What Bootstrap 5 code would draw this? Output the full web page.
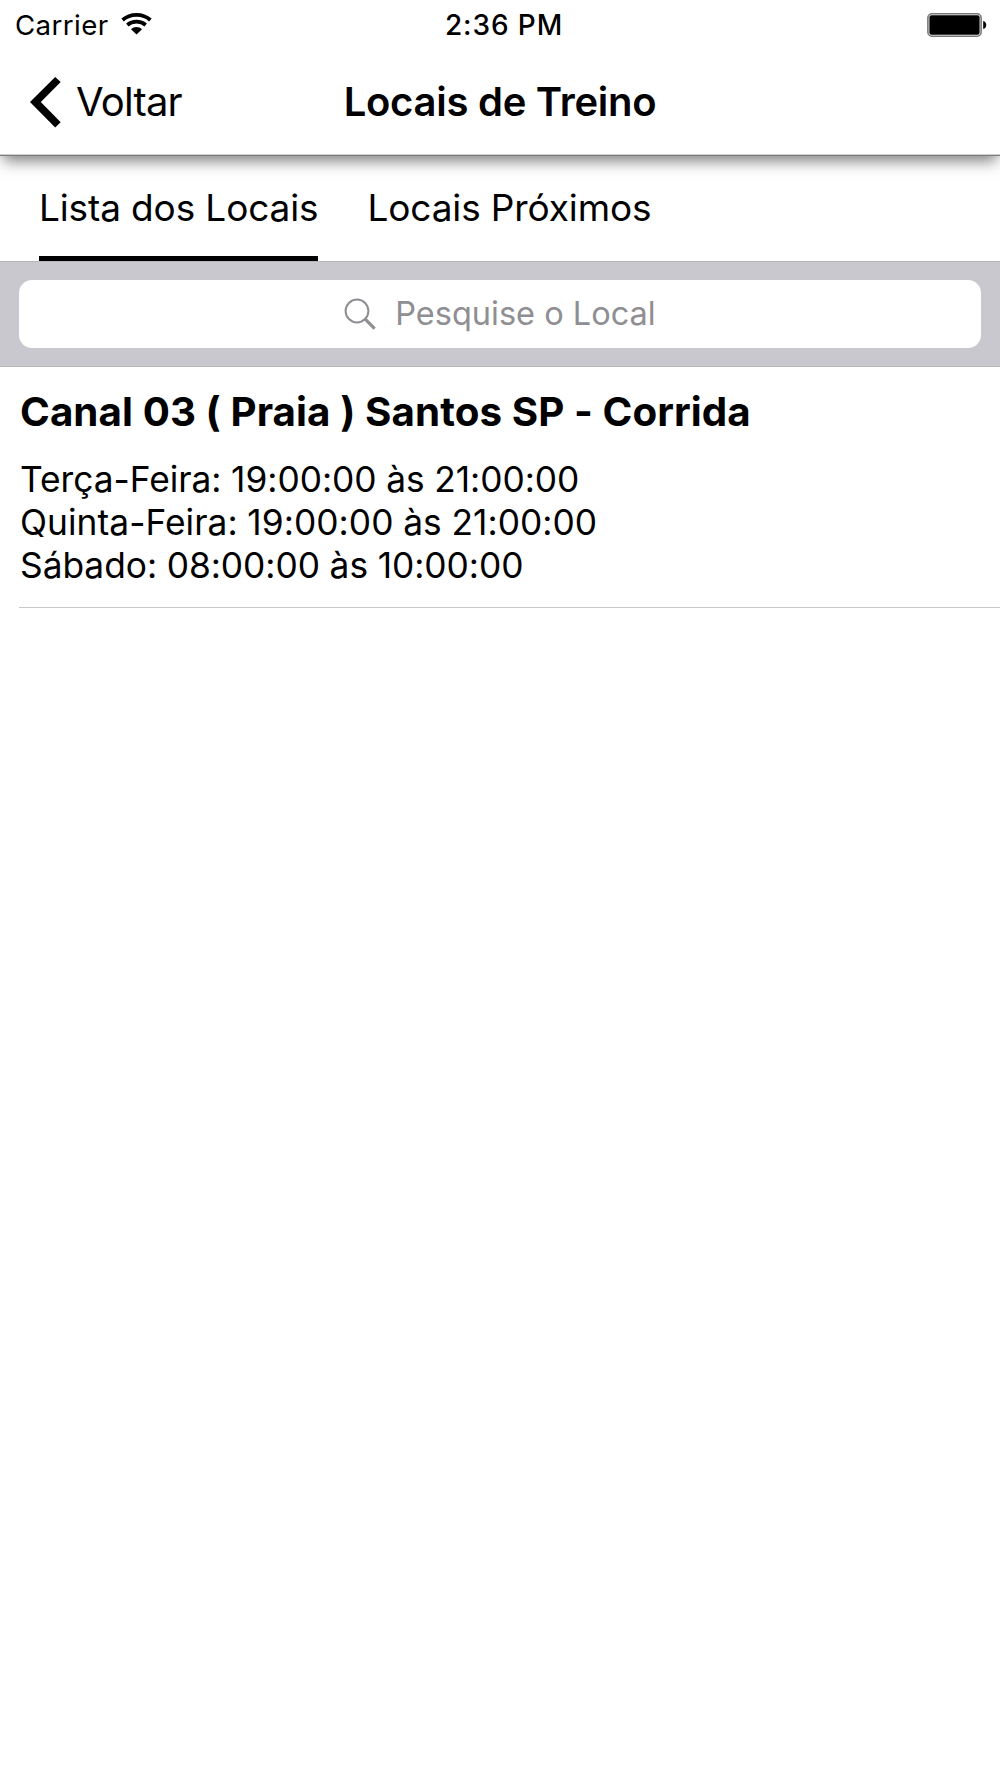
<!DOCTYPE html>
<html lang="pt-BR">
<head>
<meta charset="utf-8">
<meta name="viewport" content="width=device-width, initial-scale=1">
<title>Locais de Treino</title>
<link href="https://cdn.jsdelivr.net/npm/bootstrap@5.3.0/dist/css/bootstrap.min.css" rel="stylesheet">
<style>
body{font-family:Inter,"Liberation Sans",sans-serif;color:#000;background:#fff;font-size:35px}
svg{display:block;flex:none}
.app-head{box-shadow:0 8px 14px -3px rgba(0,0,0,.5),inset 0 -1px #cfcfcf;border-bottom:1px solid #7c7c7c;height:156px;z-index:2}
.status-bar{height:51px;font-size:27.7px;line-height:51px;padding:0 13px 0 15px}
.carrier{letter-spacing:.4px}
.wifi{margin:0 0 3px 12px}
.clock{font-weight:550;font-size:28px;letter-spacing:.9px;margin-left:6px}
.battery{margin-bottom:2px}
.side-slot{flex:1 1 0}
.title-bar{height:102px;font-size:40px;line-height:102px;padding:0 30px}
.back-link{color:#000;letter-spacing:-.8px;gap:15px}
.screen-title{font-size:40px;font-weight:600;line-height:102px;letter-spacing:-.27px}
.tabs-row{height:105px;padding:0 39px;gap:49px;font-size:37px;letter-spacing:-.13px}
.tabs-row .nav-link{padding:0;line-height:104px;color:#000;border-bottom:5px solid transparent;height:105px}
.tabs-row .nav-link.active{border-color:#000}
.search-zone{background:#c9c8ce;border-top:1px solid #b6b6ba;border-bottom:1px solid #b6b6ba;height:106px;padding:18px 19px}
.search-box{background:#fff;border-radius:13px;height:68px;color:#8e8e93;font-size:32.5px;line-height:66px;gap:19px}
.place{margin-left:19px;border-bottom:1px solid #c8c7cc;height:241px;padding-top:20px}
.place-name{font-size:40.3px;font-weight:700;line-height:50px;letter-spacing:.08px;margin-bottom:20.7px;padding-left:1px}
.hours{font-size:35.3px;line-height:43.3px;letter-spacing:-.02px;word-spacing:-.3px;padding-left:1px}
.hours li:nth-child(2){letter-spacing:.06px}
</style>
</head>
<body>
<header class="app-head bg-white position-relative">
  <div class="status-bar d-flex align-items-center">
    <div class="side-slot d-flex align-items-center">
      <span class="carrier">Carrier</span>
      <svg class="wifi" width="31" height="22" viewBox="0 0 31 22">
        <g fill="none" stroke="#000" stroke-width="3.7">
          <path d="M1.6 7C9.2 .2 21.8 .2 29.4 7"/>
          <path d="M6.3 12C11.6 7.6 19.4 7.6 24.7 12"/>
        </g>
        <path d="M10 16.2C13.1 13.4 17.9 13.4 21 16.2L15.5 21.5Z"/>
      </svg>
    </div>
    <div class="clock">2:36 PM</div>
    <div class="side-slot d-flex justify-content-end">
      <svg class="battery" width="60" height="24" viewBox="0 0 60 24">
        <rect x=".9" y=".8" width="53.2" height="22.4" rx="4" fill="#fff" stroke="#777" stroke-width="1.6"/>
        <rect x="2.4" y="2.2" width="50.2" height="19.6" rx="2"/>
        <path d="M56.2 8C60.3 8.6 60.3 15.4 56.2 16Z"/>
      </svg>
    </div>
  </div>
  <div class="title-bar d-flex align-items-center">
    <div class="side-slot d-flex">
      <a class="back-link d-flex align-items-center text-decoration-none" href="#">
        <svg width="31" height="51" viewBox="0 0 31 51"><path d="M0 25L25.2 0L30.7 5L10.8 25L30.7 45.2L25.2 50.5Z"/></svg>
        <span>Voltar</span>
      </a>
    </div>
    <h1 class="screen-title mb-0">Locais de Treino</h1>
    <div class="side-slot"></div>
  </div>
</header>
<nav class="nav tabs-row flex-nowrap">
  <a class="nav-link active" href="#">Lista dos Locais</a>
  <a class="nav-link" href="#">Locais Próximos</a>
</nav>
<div class="search-zone">
  <div class="search-box d-flex justify-content-center align-items-center">
    <svg width="32" height="32" viewBox="0 0 32 32" fill="none" stroke="#8e8e93">
      <circle cx="13" cy="13" r="11.4" stroke-width="2"/>
      <path d="M21.2 21.2L30.6 30.6" stroke-width="3.2"/>
    </svg>
    <span>Pesquise o Local</span>
  </div>
</div>
<main class="place">
  <h2 class="place-name">Canal 03 ( Praia ) Santos SP - Corrida</h2>
  <ul class="hours list-unstyled mb-0">
    <li>Terça-Feira: 19:00:00 às 21:00:00</li>
    <li>Quinta-Feira: 19:00:00 às 21:00:00</li>
    <li>Sábado: 08:00:00 às 10:00:00</li>
  </ul>
</main>
<script src="https://cdn.jsdelivr.net/npm/bootstrap@5.3.0/dist/js/bootstrap.bundle.min.js"></script>
</body>
</html>
